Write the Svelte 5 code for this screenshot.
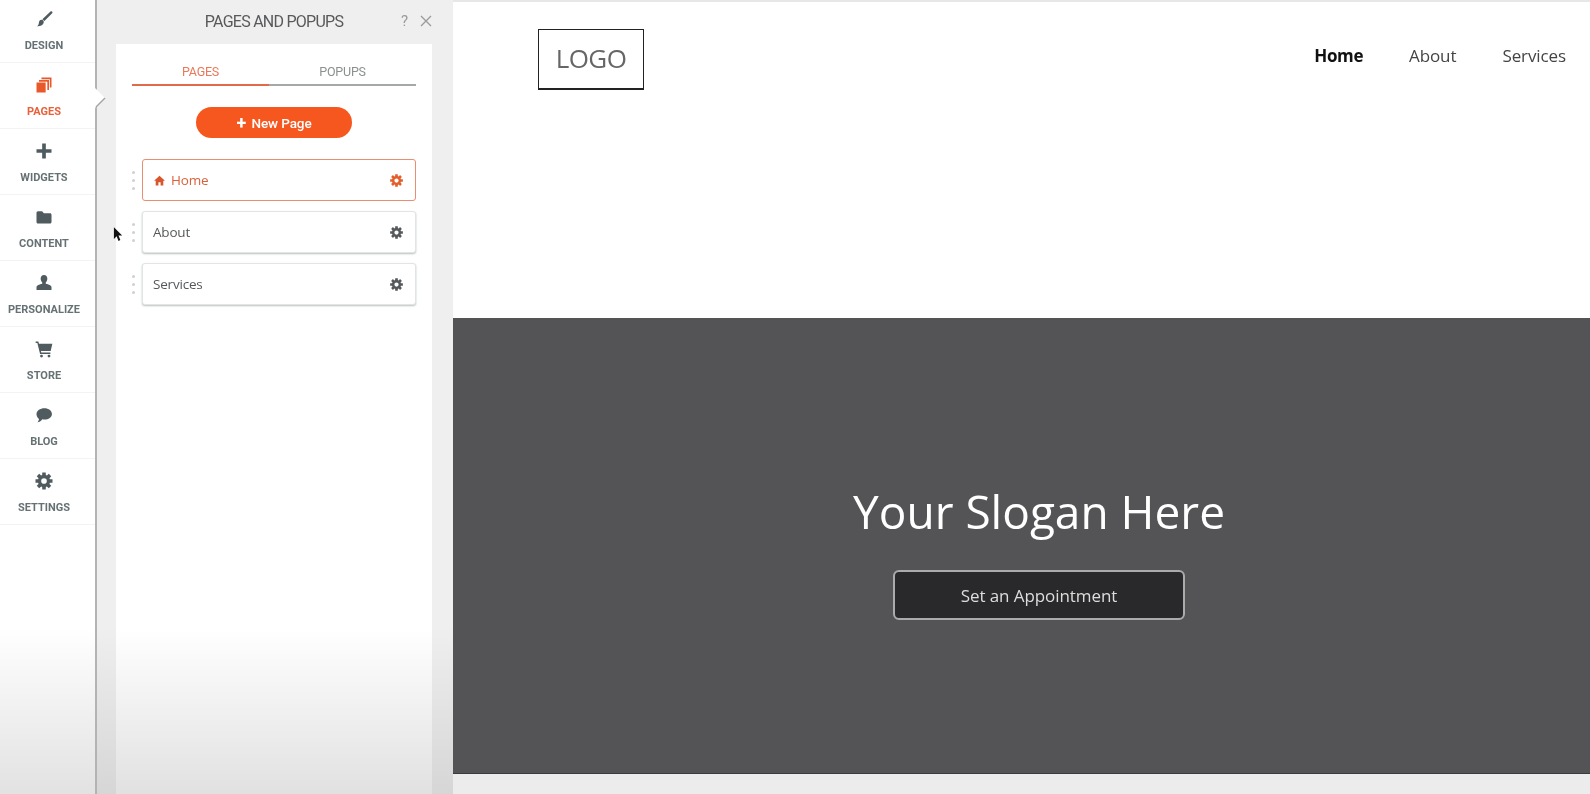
<script lang="ts">
  // Sidebar entries, icon is picked by name in the markup
  const navItems = [
    { name: "brush", label: "DESIGN" },
    { name: "pages", label: "PAGES", active: true },
    { name: "plus", label: "WIDGETS" },
    { name: "folder", label: "CONTENT" },
    { name: "person", label: "PERSONALIZE" },
    { name: "cart", label: "STORE" },
    { name: "chat", label: "BLOG" },
    { name: "gear", label: "SETTINGS" },
  ];

  const pages = [
    { title: "Home", active: true },
    { title: "About" },
    { title: "Services" },
  ];

  const siteLinks = ["Home", "About", "Services"];

  // 8 tooth gear with a hole, drawn around 12,12
  function gearPath() {
    let d = "";
    for (let i = 0; i < 8; i++) {
      const a = (i * Math.PI) / 4;
      const pts = [
        [-0.3, 7.4],
        [-0.2, 10.4],
        [0.2, 10.4],
        [0.3, 7.4],
      ].map(([t, r]) => {
        const x = 12 + r * Math.sin(a + t);
        const y = 12 - r * Math.cos(a + t);
        return `${x.toFixed(2)} ${y.toFixed(2)}`;
      });
      d += (i === 0 ? "M" : "L") + pts.join("L");
    }
    d += "Z M12 8.6a3.4 3.4 0 1 0 0 6.8a3.4 3.4 0 1 0 0-6.8Z";
    return d;
  }
  const gear = gearPath();
</script>

{#snippet icon(name: string)}
  <svg viewBox="0 0 24 24" class="nav-icon" aria-hidden="true">
    {#if name === "brush"}
      <path d="M21.500 3c.9.5.8 1.300.3 2L12.500 14.500 10 12.300 19.500 3.300c.6-.5 1.400-.7 2-.3Z" />
      <path d="M9 13c1.800.1 2.900 1.400 2.700 3-.4 3-3.500 5-8.200 4.800 1.500-1 2-2.200 2.300-3.800C6.100 14.300 7.300 13 9 13Z" />
    {:else if name === "pages"}
      <path d="M9 3h12v12h-2V5H9Z" />
      <path d="M6 6h12v12h-2V8H6Z" />
      <path d="M3 9h11v12H3Z" />
    {:else if name === "plus"}
      <path d="M9.800 3h4.400v6.800H21v4.400h-6.800V21H9.800v-6.800H3V9.800h6.800Z" />
    {:else if name === "folder"}
      <path d="M3 7c0-1 .7-2 1.800-2h5l2 2.500h7.400c1.100 0 1.800.8 1.800 1.800V18c0 1-.7 1.800-1.800 1.800H4.800C3.700 19.800 3 19 3 18Z" />
    {:else if name === "person"}
      <path d="M12 2.500c2.500 0 4 2 4 4.500 0 1.800-.8 3.400-1.900 4.300v1.500c3.500.8 6.900 1.900 6.900 4.200v3.500H3v-3.500c0-2.300 3.400-3.400 6.900-4.200v-1.500C8.800 10.400 8 8.800 8 7c0-2.500 1.500-4.500 4-4.500Z" />
    {:else if name === "cart"}
      <path d="M2 3h3.200l.8 2.800h16l-2 8.700H8.300l.4 1.700h11v1.800H7.300L4 4.800H2Z" />
      <circle cx="9" cy="20.500" r="1.700" />
      <circle cx="18" cy="20.500" r="1.700" />
    {:else if name === "chat"}
      <path d="M12.500 4c5 0 9 2.900 9 6.700s-4 6.700-9 6.700c-.9 0-1.800-.1-2.600-.3C8.400 19.500 6.300 20.500 4 20.700c1.100-1.100 1.800-2.300 2-4C4.100 15.300 3 13.200 3 10.700 3 6.900 7.500 4 12.500 4Z" />
    {:else if name === "gear"}
      <path d={gear} fill-rule="evenodd" />
    {/if}
  </svg>
{/snippet}

<div class="screen">
  <aside class="sidebar">
    <ul class="nav-list">
      {#each navItems as item}
        <li class="nav-item" class:active={item.active}>
          {@render icon(item.name)}
          <span>{item.label}</span>
        </li>
      {/each}
    </ul>
    <svg viewBox="0 0 11 20" class="notch" aria-hidden="true">
      <path d="M0 0L10 10L0 20Z" fill="#fff" />
      <path d="M10 10L1 19" stroke="#a5a5a5" stroke-width="1.500" fill="none" />
    </svg>
  </aside>

  <section class="panel">
    <header class="panel-head">
      <h2>PAGES AND POPUPS</h2>
      <div class="panel-tools">
        <span class="help">?</span>
        <svg viewBox="0 0 12 12" class="close" aria-hidden="true"><path d="M1 1l10 10M11 1L1 11" /></svg>
      </div>
    </header>

    <div class="card">
      <div class="tabs">
        <div class="tab on">PAGES</div>
        <div class="tab">POPUPS</div>
      </div>

      <button class="new-page"><span class="plus">+</span> New Page</button>

      <div class="page-list">
        {#each pages as page}
          <div class="page-row">
            <div class="grip"><i></i><i></i><i></i></div>
            <div class="page-box" class:selected={page.active}>
              {#if page.active}
                <svg viewBox="0 0 24 24" class="home-icon" aria-hidden="true">
                  <path d="M12 3l10 9.500h-3V21h-5v-6h-4v6H5v-8.500H2Z" />
                </svg>
              {/if}
              <span class="page-title">{page.title}</span>
              <svg viewBox="0 0 24 24" class="page-gear" aria-hidden="true">
                <path d={gear} fill-rule="evenodd" />
              </svg>
            </div>
          </div>
        {/each}
      </div>
    </div>
  </section>

  <main class="site">
    <header class="site-head">
      <div class="logo">LOGO</div>
      <nav class="site-nav">
        {#each siteLinks as link, i}
          <span class:current={i === 0}>{link}</span>
        {/each}
      </nav>
    </header>
    <div class="hero">
      <h1>Your Slogan Here</h1>
      <button class="cta">Set an Appointment</button>
    </div>
  </main>

  <svg viewBox="0 0 12 18" class="cursor" aria-hidden="true">
    <path d="M1 1v13l3-3 2 5 2-1-2-5h4Z" />
  </svg>
</div>

<style>
  :global(body) {
    background: #fff;
  }

  .screen {
    position: relative;
    display: flex;
    height: 794px;
    overflow: hidden;
    font-family: Roboto, sans-serif;
    filter: blur(0.45px);
  }

  .sidebar {
    position: relative;
    flex: 0 0 95px;
    background: linear-gradient(#fff 0, #fff 79%, #e2e2e2 100%);
    border-right: 2px solid #b3b3b3;
  }

  .nav-list {
    list-style: none;
    margin: -3px 0 0;
    padding: 0 7px 0 0;
  }

  .nav-item {
    position: relative;
    display: flex;
    flex-direction: column;
    align-items: center;
    height: 66px;
    padding-top: 12px;
    box-sizing: border-box;
    color: #667174;
    font-size: 11px;
    font-weight: 700;
  }

  /* divider runs the full sidebar width, past the list's right padding */
  .nav-item::after {
    content: "";
    position: absolute;
    left: 0;
    right: -7px;
    bottom: 0;
    height: 1px;
    background: #f3f3f3;
  }

  .nav-item span {
    margin-top: 10px;
    line-height: 14px;
  }

  .nav-icon {
    width: 20px;
    height: 20px;
    fill: #4f5b5e;
  }

  .nav-item.active {
    color: #e8613a;
  }

  .nav-item.active .nav-icon {
    fill: #e9582a;
  }

  .notch {
    position: absolute;
    top: 88px;
    left: 95px;
    width: 11px;
    height: 20px;
  }

  .panel {
    flex: 0 0 356px;
    display: flex;
    flex-direction: column;
    box-sizing: border-box;
    padding: 0 21px 0 19px;
    background: linear-gradient(#efefef 0, #efefef 79%, #d6d6d6 100%);
  }

  .panel-head {
    position: relative;
    height: 44px;
    display: flex;
    align-items: flex-start;
    justify-content: center;
  }

  .panel-head h2 {
    margin: 13px 0 0;
    font-size: 16px;
    font-weight: 400;
    line-height: 17px;
    letter-spacing: -0.75px;
    color: #58595b;
  }

  .panel-tools {
    position: absolute;
    top: 12px;
    right: 0;
    display: flex;
    align-items: center;
    gap: 12px;
    color: #9a9a9a;
    font-size: 15px;
  }

  .close {
    width: 12px;
    height: 12px;
    fill: none;
    stroke: #9a9a9a;
    stroke-width: 1.300;
  }

  .card {
    flex: 1;
    padding: 0 16px 0 16px;
    background: linear-gradient(#fff 0, #fff 78%, #e1e1e1 100%);
  }

  .tabs {
    display: flex;
    height: 41px;
  }

  .tab {
    flex: 1;
    padding-top: 20px;
    text-align: center;
    font-size: 12.500px;
    line-height: 15px;
    letter-spacing: -0.2px;
    color: #8b8f90;
    border-bottom: 2px solid #a5a8a8;
    box-sizing: content-box;
    height: 20px;
  }

  .tab.on {
    flex: 0 0 137px;
    color: #e9795a;
    border-bottom-color: #e2694a;
  }

  .new-page {
    display: block;
    width: 156px;
    height: 31px;
    margin: 22px 0 0 64px;
    padding: 0;
    border: none;
    border-radius: 16px;
    background: #f6571f;
    color: #fff;
    font-family: Roboto, sans-serif;
    font-size: 13.500px;
    font-weight: 500;
    letter-spacing: -0.1px;
  }

  .plus {
    font-size: 18px;
    font-weight: 700;
    line-height: 14px;
    margin-right: 2px;
    vertical-align: -1px;
  }

  .page-list {
    display: flex;
    flex-direction: column;
    gap: 10px;
    margin-top: 21px;
  }

  .page-row {
    position: relative;
    margin-left: 10px;
  }

  .grip {
    position: absolute;
    left: -10px;
    top: 12px;
    display: flex;
    flex-direction: column;
    gap: 5px;
  }

  .grip i {
    width: 3px;
    height: 3px;
    border-radius: 50%;
    background: #cfd2d2;
  }

  .page-box {
    display: flex;
    align-items: center;
    height: 42px;
    box-sizing: border-box;
    padding: 0 11px 0 10px;
    border: 1px solid #e2e5e5;
    border-radius: 3px;
    box-shadow: 0 1px 2px #b9c0c0;
    background: #fff;
    color: #55585a;
    font-size: 13.500px;
    font-family: "Open Sans", sans-serif;
    letter-spacing: -0.2px;
  }

  .page-box.selected {
    border: 1.500px solid #ea8e72;
    box-shadow: none;
    color: #d9623b;
  }

  .home-icon {
    width: 13px;
    height: 13px;
    margin-right: 5px;
    fill: #d9552c;
  }

  .page-title {
    flex: 1;
  }

  .page-gear {
    width: 15px;
    height: 15px;
    fill: #55595b;
  }

  .selected .page-gear {
    fill: #e2602d;
  }

  .site {
    flex: 1;
    display: flex;
    flex-direction: column;
    min-width: 0;
    background: #ececec;
  }

  .site-head {
    height: 316px;
    display: flex;
    align-items: flex-start;
    justify-content: space-between;
    padding: 0 24px 0 85px;
    background: #fff;
    border-top: 2px solid #e6e8e8;
  }

  .logo {
    width: 106px;
    height: 61px;
    margin-top: 27px;
    padding-bottom: 2px;
    box-sizing: border-box;
    border: 1.500px solid #222;
    border-bottom-width: 2px;
    display: flex;
    align-items: center;
    justify-content: center;
    font-family: "Open Sans", sans-serif;
    font-size: 26px;
    letter-spacing: -0.6px;
    color: #666;
  }

  .site-nav {
    display: flex;
    gap: 46px;
    margin-top: 43px;
    font-family: "Open Sans", sans-serif;
    font-size: 17px;
    line-height: 22px;
    letter-spacing: -0.1px;
    color: #444;
  }

  .site-nav .current {
    font-weight: 700;
    letter-spacing: -0.4px;
    color: #111;
  }

  .hero {
    height: 456px;
    display: flex;
    flex-direction: column;
    align-items: center;
    box-sizing: border-box;
    padding: 163px 0 0 35px;
    background: #545356;
    border-bottom: 1px solid #3c3c3e;
  }

  .hero h1 {
    margin: 0;
    font-family: "Open Sans", sans-serif;
    font-size: 46px;
    font-weight: 400;
    line-height: 60px;
    color: #fff;
  }

  .cta {
    width: 292px;
    height: 50px;
    margin-top: 29px;
    border: 2px solid #ababab;
    border-radius: 6px;
    background: #29282a;
    color: #ddd;
    font-family: "Open Sans", sans-serif;
    font-size: 17px;
    letter-spacing: -0.08px;
  }

  .cursor {
    position: absolute;
    left: 113px;
    top: 226px;
    width: 11px;
    height: 17px;
    fill: #111;
  }
</style>
